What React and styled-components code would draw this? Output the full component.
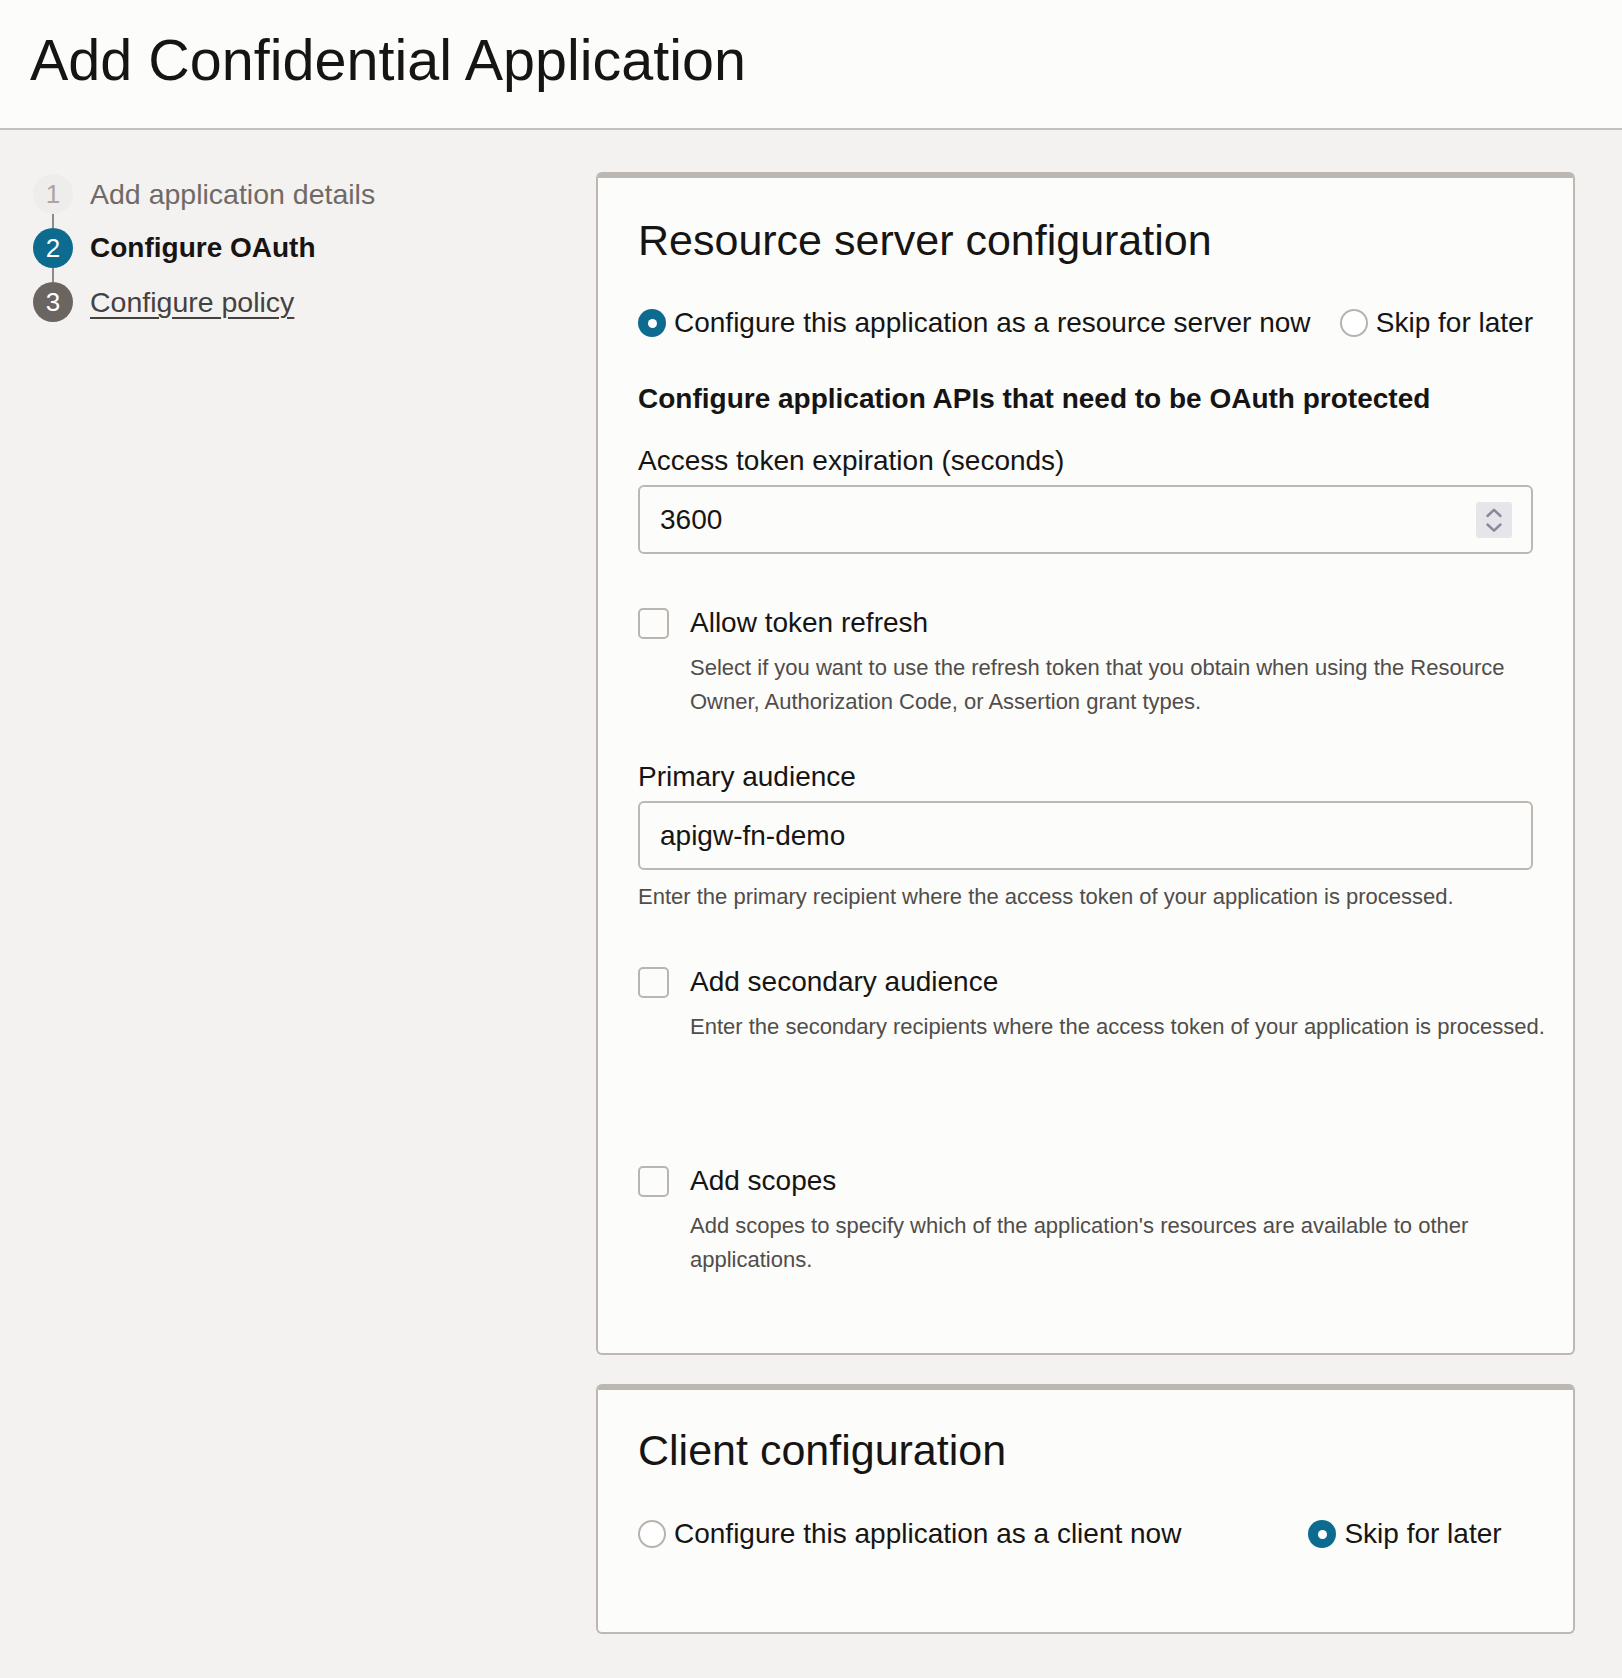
import React from 'react';
import styled, { createGlobalStyle } from 'styled-components';

const GlobalStyle = createGlobalStyle`
  html, body { margin: 0; padding: 0; background: #f3f2f1; }
  body {
    font-family: "Liberation Sans", Arial, Helvetica, sans-serif;
    color: #161513;
  }
  * { box-sizing: border-box; }
`;

const Header = styled.header`
  height: 130px;
  background: #fcfcfb;
  border-bottom: 2px solid #c5c1bc;
  display: flex;
  align-items: center;
  padding: 0 0 8px 30px;
`;

const Title = styled.h1`
  margin: 0;
  font-size: 57.5px;
  font-weight: 400;
  line-height: 68px;
  color: #161513;
`;

const Main = styled.div`
  display: grid;
  grid-template-columns: 596px 979px;
  padding: 42px 0 46px;
`;

const Steps = styled.ol`
  list-style: none;
  margin: 0;
  padding: 2px 0 0 33px;
  display: flex;
  flex-direction: column;
  align-items: flex-start;
`;

const StepRow = styled.li`
  display: flex;
  align-items: center;
  gap: 17px;
  height: 40px;
`;

const circleColors = {
  done: { bg: '#eeedeb', fg: '#aaa5a0' },
  current: { bg: '#0d6b8f', fg: '#ffffff' },
  upcoming: { bg: '#6b6561', fg: '#ffffff' },
};

const StepCircle = styled.span`
  width: 40px;
  height: 40px;
  border-radius: 50%;
  flex: none;
  display: flex;
  align-items: center;
  justify-content: center;
  font-size: 26px;
  background: ${(p) => circleColors[p.$state].bg};
  color: ${(p) => circleColors[p.$state].fg};
`;

const StepLabel = styled.span`
  font-size: ${(p) => (p.$state === 'current' ? 28 : 28.5)}px;
  line-height: 40px;
  white-space: nowrap;
  color: ${(p) => (p.$state === 'done' ? '#6f6a66' : p.$state === 'current' ? '#161513' : '#45413e')};
  font-weight: ${(p) => (p.$state === 'current' ? 700 : 400)};
  text-decoration: ${(p) => (p.$state === 'upcoming' ? 'underline' : 'none')};
  text-underline-offset: 5px;
  text-decoration-thickness: 1.5px;
`;

const Connector = styled.li`
  width: 2px;
  height: 14px;
  margin-left: 19px;
  background: #8f8a85;
`;

const Cards = styled.div`
  display: flex;
  flex-direction: column;
  gap: 29px;
`;

const Card = styled.section`
  background: #fcfcfb;
  border: 2px solid #bdb8b2;
  border-top: 6px solid #bcb7b0;
  border-radius: 6px;
  padding: ${(p) => p.$pt}px 40px ${(p) => p.$pb}px;
`;

const CardTitle = styled.h2`
  margin: 0;
  font-size: 43px;
  font-weight: 400;
  line-height: 52px;
  color: #161513;
`;

const RadioGroup = styled.div`
  margin-top: ${(p) => p.$mt}px;
  display: flex;
  align-items: center;
  height: 36px;
  justify-content: ${(p) => (p.$spread ? 'space-between' : 'flex-start')};
  gap: ${(p) => p.$gap || 0}px;
`;

const RadioOption = styled.label`
  display: flex;
  align-items: center;
  gap: 8px;
  font-size: 28px;
  line-height: 36px;
  white-space: nowrap;
`;

const RadioDot = styled.span`
  width: 28px;
  height: 28px;
  border-radius: 50%;
  flex: none;
  display: flex;
  align-items: center;
  justify-content: center;
  background: ${(p) => (p.$checked ? '#0d6b8f' : '#ffffff')};
  border: ${(p) => (p.$checked ? 'none' : '2px solid #b8b3ad')};
  &::after {
    content: '';
    display: ${(p) => (p.$checked ? 'block' : 'none')};
    width: 9px;
    height: 9px;
    border-radius: 50%;
    background: #ffffff;
  }
`;

const SubHeading = styled.h3`
  margin: 40px 0 0;
  font-size: 28px;
  font-weight: 700;
  line-height: 36px;
`;

const FieldLabel = styled.div`
  margin-top: ${(p) => p.$mt}px;
  margin-bottom: 6px;
  font-size: 28px;
  line-height: 36px;
`;

const InputBox = styled.div`
  height: 69px;
  border: 2px solid #bdb8b2;
  border-radius: 6px;
  background: #fcfcfb;
  display: flex;
  align-items: center;
  padding: 0 19px 0 20px;
`;

const Input = styled.input`
  flex: 1;
  min-width: 0;
  border: none;
  outline: none;
  background: transparent;
  padding: 0;
  font-family: inherit;
  font-size: 28px;
  color: #161513;
`;

const Spinner = styled.span`
  width: 36px;
  height: 36px;
  border-radius: 3px;
  background: #e6e5ea;
  display: flex;
  flex: none;
`;

const Help = styled.p`
  margin: 10px ${(p) => (p.$indent ? '-40px' : '0')} 0 ${(p) => (p.$indent ? '52px' : '0')};
  font-size: 22px;
  line-height: 34px;
  color: #504d4a;
`;

const CheckRow = styled.label`
  margin-top: ${(p) => p.$mt}px;
  display: flex;
  align-items: center;
  gap: 21px;
  height: 36px;
  font-size: 28px;
  line-height: 36px;
`;

const CheckBox = styled.span`
  width: 31px;
  height: 31px;
  flex: none;
  border: 2px solid #bab5af;
  border-radius: 5px;
  background: #fcfcfb;
`;

function Radio({ checked, children }) {
  return (
    <RadioOption>
      <RadioDot $checked={checked} />
      {children}
    </RadioOption>
  );
}

function Check({ mt, label, help }) {
  return (
    <>
      <CheckRow $mt={mt}>
        <CheckBox />
        {label}
      </CheckRow>
      <Help $indent>{help}</Help>
    </>
  );
}

const steps = [
  { n: 1, label: 'Add application details', state: 'done' },
  { n: 2, label: 'Configure OAuth', state: 'current' },
  { n: 3, label: 'Configure policy', state: 'upcoming' },
];

export default function App() {
  return (
    <>
      <GlobalStyle />
      <Header>
        <Title>Add Confidential Application</Title>
      </Header>
      <Main>
        <Steps>
          {steps.map((s, i) => (
            <React.Fragment key={s.n}>
              {i > 0 && <Connector />}
              <StepRow>
                <StepCircle $state={s.state}>{s.n}</StepCircle>
                <StepLabel $state={s.state}>{s.label}</StepLabel>
              </StepRow>
            </React.Fragment>
          ))}
        </Steps>
        <Cards>
          <Card $pt={36} $pb={76}>
            <CardTitle>Resource server configuration</CardTitle>
            <RadioGroup $mt={39} $spread>
              <Radio checked>Configure this application as a resource server now</Radio>
              <Radio>Skip for later</Radio>
            </RadioGroup>
            <SubHeading>Configure application APIs that need to be OAuth protected</SubHeading>
            <FieldLabel $mt={26}>Access token expiration (seconds)</FieldLabel>
            <InputBox>
              <Input defaultValue="3600" readOnly />
              <Spinner>
                <svg width="36" height="36" viewBox="0 0 36 36" fill="none" stroke="#8b889a" strokeWidth="2.5" strokeLinecap="round" strokeLinejoin="round">
                  <path d="M11.5 14 L18 7.8 L24.5 14" />
                  <path d="M11.5 22.5 L18 28.7 L24.5 22.5" />
                </svg>
              </Spinner>
            </InputBox>
            <Check
              mt={51}
              label="Allow token refresh"
              help="Select if you want to use the refresh token that you obtain when using the Resource Owner, Authorization Code, or Assertion grant types."
            />
            <FieldLabel $mt={40}>Primary audience</FieldLabel>
            <InputBox>
              <Input defaultValue="apigw-fn-demo" readOnly />
            </InputBox>
            <Help>Enter the primary recipient where the access token of your application is processed.</Help>
            <Check
              mt={50}
              label="Add secondary audience"
              help="Enter the secondary recipients where the access token of your application is processed."
            />
            <Check
              mt={119}
              label="Add scopes"
              help="Add scopes to specify which of the application's resources are available to other applications."
            />
          </Card>
          <Card $pt={34} $pb={80}>
            <CardTitle>Client configuration</CardTitle>
            <RadioGroup $mt={40} $gap={127}>
              <Radio>Configure this application as a client now</Radio>
              <Radio checked>Skip for later</Radio>
            </RadioGroup>
          </Card>
        </Cards>
      </Main>
    </>
  );
}
